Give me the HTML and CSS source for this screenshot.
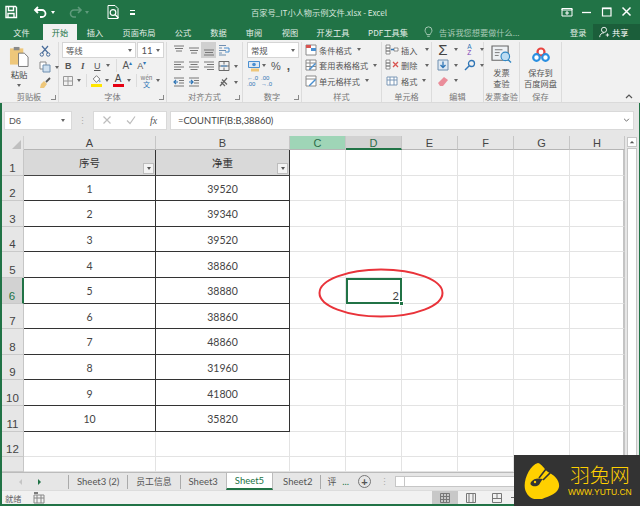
FILE: index.html
```html
<!DOCTYPE html>
<html lang="zh">
<head>
<meta charset="utf-8">
<title>Excel</title>
<link rel="stylesheet" href="styles.css">
</head>
<body>
<div class="window">
  <header class="titlebar">
    <div class="qat">
      <svg class="ic16" viewBox="0 0 16 16"><path d="M3 2.500h9.500l1 1V13.500H3zM5.500 2.500v4h5v-4M5 13.500V9.500h6v4" fill="none" stroke="#fff" stroke-width="1.400"/></svg>
      <svg class="ic16 undo" viewBox="0 0 16 16"><path d="M5 3L2 6l3 3M2.500 6H9a3.500 3.500 0 0 1 0 7H7" fill="none" stroke="#fff" stroke-width="1.800"/></svg>
      <span class="caret-w"></span>
      <svg class="ic16 redo" viewBox="0 0 16 16"><path d="M11 3l3 3-3 3M13.500 6H7a3.500 3.500 0 0 0 0 7h2" fill="none" stroke="#5f9b7c" stroke-width="1.600"/></svg>
      <span class="caret-w dim"></span>
      <svg class="ic16 preview" viewBox="0 0 16 16"><path d="M3 1.500h7l3 3V14.500H3z" fill="none" stroke="#fff"/><circle cx="8" cy="8.500" r="2.800" fill="none" stroke="#fff" stroke-width="1.200"/><path d="M10 10.500l3.500 3.500" stroke="#fff" stroke-width="1.400"/></svg>
      <span class="qat-more"></span>
    </div>
    <div class="doc-title">百家号_IT小人物示例文件.xlsx - Excel</div>
    <div class="winbtns">
      <svg class="ic12" viewBox="0 0 12 12"><path d="M1 2.500h10v7.500H1z" fill="none" stroke="#fff"/><path d="M1 2.500h10v1.500H1zM6 5v4M4.200 7H8" stroke="#fff" fill="none"/></svg>
      <svg class="ic12 wmin" viewBox="0 0 12 12"><path d="M1 6.500h9" stroke="#fff" stroke-width="1.300"/></svg>
      <svg class="ic12 wmax" viewBox="0 0 12 12"><path d="M1.500 2h8.500v8H1.500z" fill="none" stroke="#fff" stroke-width="1.200"/><path d="M1.500 2.500h8.500" stroke="#fff" stroke-width="1.400"/></svg>
      <svg class="ic12 wclose" viewBox="0 0 12 12"><path d="M1.500 1.500l8 8M9.500 1.500l-8 8" stroke="#fff" stroke-width="1.500"/></svg>
    </div>
  </header>

  <nav class="tabs">
    <span class="tab w43">文件</span>
    <span class="tab w34 active">开始</span>
    <span class="tab w36">插入</span>
    <span class="tab w52">页面布局</span>
    <span class="tab w36">公式</span>
    <span class="tab w35">数据</span>
    <span class="tab w36">审阅</span>
    <span class="tab w36">视图</span>
    <span class="tab w50">开发工具</span>
    <span class="tab w60">PDF工具集</span>
    <svg class="bulb" viewBox="0 0 10 14"><path d="M3 10C2.500 8 1 7.500 1 5a4 4 0 0 1 8 0c0 2.500-1.500 3-2 5zM3.500 12h3" fill="none" stroke="#b9d6c6" stroke-width="1"/></svg>
    <span class="tell">告诉我您想要做什么...</span>
    <span class="login">登录</span>
    <span class="share"><svg class="ic12" viewBox="0 0 12 14"><circle cx="6" cy="4.500" r="3" fill="none" stroke="#fff"/><path d="M1 13c0-3 2-5 5-5M8 10.500h4M10 8.500v4" fill="none" stroke="#fff"/></svg>共享</span>
  </nav>

  <section class="ribbon">
    <div class="group g-clip">
      <div class="gbody clip">
        <div class="paste">
          <svg class="paste-ic" viewBox="0 0 21 22"><path d="M1 3h14v17H1z" fill="#eec77a"/><path d="M5 1.500h6V5H5z" fill="#8a8a8a"/><path d="M10 8h6l4 4v10H10z" fill="#fff" stroke="#777"/></svg>
          <span>粘贴</span>
          <i class="caret"></i>
        </div>
        <div class="clip-tools">
          <svg class="ic12" viewBox="0 0 12 12"><path d="M3 1l6 7M9 1L3 8" stroke="#4a6d9b" stroke-width="1.200"/><circle cx="2.800" cy="9.500" r="1.700" fill="none" stroke="#4a6d9b"/><circle cx="9.200" cy="9.500" r="1.700" fill="none" stroke="#4a6d9b"/></svg>
          <div class="hrow"><svg class="ic12" viewBox="0 0 12 12"><path d="M1 1h6v7H1z" fill="#fff" stroke="#8a8a8a"/><path d="M4 4h7v7H4z" fill="#cfe0ef" stroke="#6f8fb0"/></svg><i class="caret c-copy"></i></div>
          <svg class="ic12" viewBox="0 0 12 12"><path d="M7 5l4-4" stroke="#555" stroke-width="1.800"/><path d="M2 7l3-3 3 3-3 4H1z" fill="#eec77a"/></svg>
        </div>
      </div>
      <div class="glabel">剪贴板<i class="launch"></i></div>
    </div>

    <div class="group g-font">
      <div class="gbody vstack">
        <div class="hrow selects">
          <div class="select font-sel">等线<i class="caret"></i></div>
          <div class="select size-sel">11<i class="caret"></i></div>
        </div>
        <div class="hrow fmt">
          <b class="fbtn">B</b><em class="fbtn serif">I</em><u class="fbtn">U</u><i class="caret"></i>
          <span class="vsep"></span>
          <span class="fbtn big">A<sup>▴</sup></span><span class="fbtn small">A<sup>▾</sup></span>
        </div>
        <div class="hrow fmt fmt3">
          <svg class="ic12" viewBox="0 0 12 12"><path d="M1.500 1.500h9v9h-9zM6 1.500v9M1.500 6h9" fill="none" stroke="#999"/></svg><i class="caret"></i>
          <span class="vsep"></span>
          <span class="colorbtn"><svg class="ic12" viewBox="0 0 12 12"><path d="M2 6l4-4 4 4-4 4z" fill="#fff" stroke="#666"/><path d="M10 7c1 1.500 1 3 0 3s-1-1.500 0-3" fill="#4a8fd0"/></svg><i class="bar yellow"></i></span><i class="caret"></i>
          <span class="colorbtn ca"><span class="a-letter">A</span><i class="bar red"></i></span><i class="caret"></i>
          <span class="vsep"></span>
          <span class="wen"><small>wén</small>文</span><i class="caret"></i>
        </div>
      </div>
      <div class="glabel">字体<i class="launch"></i></div>
    </div>

    <div class="group g-align">
      <div class="gbody align-grid">
        <svg class="al" viewBox="0 0 12 12"><path d="M1 2h10M2 4.500h8M3 7h6" stroke="#777"/></svg>
        <svg class="al" viewBox="0 0 12 12"><path d="M1 4h10M2 6.500h8M3 9h6" stroke="#777"/></svg>
        <span class="al-on"><svg class="al" viewBox="0 0 12 12"><path d="M1 6h10M2 8.500h8M1 11h10" stroke="#777"/></svg></span>
        <svg class="al" viewBox="0 0 12 12"><path d="M1 1.500h7M1 4h3M1 6.500h7M1 9h3M1 11h7" stroke="#6f8fb0"/><path d="M6 4h5v4H7" fill="none" stroke="#4a8fd0"/></svg>
        <i></i>
        <svg class="al" viewBox="0 0 12 12"><path d="M1 2h10M1 4.500h7M1 7h10M1 9.500h7" stroke="#777"/></svg>
        <svg class="al" viewBox="0 0 12 12"><path d="M1 2h10M2.500 4.500h7M1 7h10M2.500 9.500h7" stroke="#777"/></svg>
        <svg class="al" viewBox="0 0 12 12"><path d="M1 2h10M4 4.500h7M1 7h10M4 9.500h7" stroke="#777"/></svg>
        <svg class="al" viewBox="0 0 12 12"><path d="M1 1.500h10v9H1zM1 6h10M6 1.500v3M6 7.500v3" fill="none" stroke="#6a6a6a"/><path d="M3 6h6" stroke="#4a8fd0"/></svg>
        <i class="caret"></i>
        <svg class="al" viewBox="0 0 12 12"><path d="M1 2h10M6 4.500h5M6 7h5M1 10h10" stroke="#777"/><path d="M5 6H1M3 4L1 6l2 2" fill="none" stroke="#2f75b5" stroke-width="1.200"/></svg>
        <svg class="al" viewBox="0 0 12 12"><path d="M1 2h10M6 4.500h5M6 7h5M1 10h10" stroke="#777"/><path d="M1 6h4M3 4l2 2-2 2" fill="none" stroke="#2f75b5" stroke-width="1.200"/></svg>
        <span></span>
        <svg class="al" viewBox="0 0 12 12"><path d="M2 10L9 2M4 3.500l5 5M3 6l4 4" fill="none" stroke="#666" stroke-width="1.200"/></svg>
        <i class="caret"></i>
      </div>
      <div class="glabel">对齐方式<i class="launch"></i></div>
    </div>

    <div class="group g-num">
      <div class="gbody vstack">
        <div class="select num-sel">常规<i class="caret"></i></div>
        <div class="hrow num2">
          <svg class="ic12" viewBox="0 0 12 12"><path d="M0.500 1.500h11v6H0.500z" fill="#dfe9f3" stroke="#4a8fd0"/><circle cx="6" cy="4.500" r="1.800" fill="#4a8fd0"/><path d="M3 8.500h8v3H3z" fill="#eec77a"/></svg><i class="caret"></i>
          <span class="pct">%</span><span class="comma">,</span>
        </div>
        <div class="hrow num3">
          <span class="dec"><small>←.0</small><small>.00</small></span>
          <span class="dec"><small>.00</small><small>→.0</small></span>
        </div>
      </div>
      <div class="glabel">数字<i class="launch"></i></div>
    </div>

    <div class="group g-style">
      <div class="gbody rows">
        <div class="cmd"><svg class="ic12" viewBox="0 0 12 12"><path d="M1 1h10v10H1z" fill="#fff" stroke="#8a8a8a"/><path d="M1 1h5v3H1z" fill="#d9534f"/><path d="M6 4h5v3H6z" fill="#4a8fd0"/></svg>条件格式<i class="caret"></i></div>
        <div class="cmd"><svg class="ic12" viewBox="0 0 12 12"><path d="M1 1h10v10H1zM1 4h10M1 7.500h10M5 1v10" fill="#fff" stroke="#8a8a8a"/><path d="M4 10l6-6 1 1-6 6H4z" fill="#4a8fd0"/></svg>套用表格格式<i class="caret"></i></div>
        <div class="cmd"><svg class="ic12" viewBox="0 0 12 12"><path d="M1 1h10v10H1zM1 4h10" fill="#fff" stroke="#8a8a8a"/><path d="M4 10l6-6 1 1-6 6H4z" fill="#4a8fd0"/></svg>单元格样式<i class="caret"></i></div>
      </div>
      <div class="glabel">样式</div>
    </div>

    <div class="group g-cells">
      <div class="gbody rows">
        <div class="cmd"><svg class="ic14" viewBox="0 0 14 12"><path d="M1 1h4v3H1zM1 4h4v3H1zM1 7h4v3H1zM9 4h4v3H9z" fill="#fff" stroke="#777" stroke-width=".8"/><path d="M6 5.500h3" stroke="#2f75b5" stroke-width="1.500"/></svg>插入<i class="caret far"></i></div>
        <div class="cmd"><svg class="ic14" viewBox="0 0 14 12"><path d="M1 1h4v3H1zM1 4h4v3H1zM1 7h4v3H1z" fill="#fff" stroke="#777" stroke-width=".8"/><path d="M8 3l5 5M13 3L8 8" stroke="#d9534f" stroke-width="1.300"/></svg>删除<i class="caret far"></i></div>
        <div class="cmd"><svg class="ic14" viewBox="0 0 14 12"><path d="M2 2h10v8H2zM2 5h10M5 2v8M9 2v8" fill="#fff" stroke="#6f8fb0" stroke-width=".9"/></svg>格式<i class="caret"></i></div>
      </div>
      <div class="glabel">单元格</div>
    </div>

    <div class="group g-edit">
      <div class="gbody edit-grid">
        <span class="sigma">Σ</span><i class="caret"></i>
        <span class="az"><small>A</small><small>Z</small></span><i class="caret"></i>
        <svg class="ic12" viewBox="0 0 12 12"><path d="M1 1h10v10H1z" fill="#dfe9f3" stroke="#6f8fb0"/><path d="M6 2.500v6M3.500 6L6 8.500 8.500 6" fill="none" stroke="#2f75b5" stroke-width="1.300"/></svg><i class="caret"></i>
        <svg class="ic12" viewBox="0 0 12 12"><circle cx="7.500" cy="4.500" r="3" fill="none" stroke="#2f75b5" stroke-width="1.300"/><path d="M5 7l-4 4" stroke="#2f75b5" stroke-width="1.500"/></svg><i class="caret"></i>
        <svg class="ic12" viewBox="0 0 12 12"><path d="M1 8l6-6 4 3-5 6H3z" fill="#ea8d9a"/></svg><i class="caret"></i>
      </div>
      <div class="glabel">编辑</div>
    </div>

    <div class="group g-inv">
      <div class="gbody big-btn">
        <svg class="big-ic" viewBox="0 0 22 20"><path d="M1 1h17v15H1z" fill="#eef1f4" stroke="#666" stroke-width="1.200"/><path d="M4 5h8M4 8h5M4 11h4" stroke="#777"/><circle cx="15" cy="12" r="4.500" fill="#bcdcf2" stroke="#2f87c4" stroke-width="1.200"/><path d="M18 15.500l3 3" stroke="#2f87c4" stroke-width="1.500"/></svg>
        <span>发票<br>查验</span>
      </div>
      <div class="glabel">发票查验</div>
    </div>

    <div class="group g-save">
      <div class="gbody big-btn">
        <svg class="big-ic cloud" viewBox="0 0 18 16"><circle cx="9" cy="5" r="3.500" fill="#fff" stroke="#e8433f" stroke-width="2.200"/><circle cx="4.500" cy="10.500" r="3.300" fill="#fff" stroke="#2a8fe0" stroke-width="2.200"/><circle cx="13.500" cy="10.500" r="3.300" fill="#fff" stroke="#2a8fe0" stroke-width="2.200"/></svg>
        <span>保存到<br>百度网盘</span>
      </div>
      <div class="glabel">保存</div>
    </div>
    <svg class="collapse" viewBox="0 0 8 5"><path d="M1 4l3-3 3 3" fill="none" stroke="#555" stroke-width="1.200"/></svg>
  </section>

  <section class="formula">
    <div class="namebox">D6<i class="caret"></i></div>
    <span class="fdots">⋮</span>
    <div class="fbuttons">
      <svg class="ic10" viewBox="0 0 10 10"><path d="M1.500 1.500l7 7M8.500 1.500l-7 7" stroke="#bdbdbd" stroke-width="1.200"/></svg>
      <svg class="ic10" viewBox="0 0 10 10"><path d="M1 5.500l3 3 5-7" fill="none" stroke="#bdbdbd" stroke-width="1.200"/></svg>
      <span class="fx">fx</span>
    </div>
    <div class="finput">=COUNTIF(B:B,38860)<svg class="fchev" viewBox="0 0 8 5"><path d="M1 1l3 3 3-3" fill="none" stroke="#666" stroke-width="1.200"/></svg></div>
  </section>

  <section class="sheet">
    <div class="grid">
      <div class="corner"><i></i></div><div class="ch">A</div><div class="ch">B</div><div class="ch ch-c">C</div><div class="ch ch-d">D</div><div class="ch">E</div><div class="ch">F</div><div class="ch">G</div><div class="ch">H</div>
      <div class="rh">1</div><div class="c th">序号<i class="filter"></i></div><div class="c th thb">净重<i class="filter"></i></div><div class="e"></div><div class="e"></div><div class="e"></div><div class="e"></div><div class="e"></div><div class="e"></div>
      <div class="rh">2</div><div class="c">1</div><div class="c cb">39520</div><div class="e"></div><div class="e"></div><div class="e"></div><div class="e"></div><div class="e"></div><div class="e"></div>
      <div class="rh">3</div><div class="c">2</div><div class="c cb">39340</div><div class="e"></div><div class="e"></div><div class="e"></div><div class="e"></div><div class="e"></div><div class="e"></div>
      <div class="rh">4</div><div class="c">3</div><div class="c cb">39520</div><div class="e"></div><div class="e"></div><div class="e"></div><div class="e"></div><div class="e"></div><div class="e"></div>
      <div class="rh">5</div><div class="c">4</div><div class="c cb">38860</div><div class="e"></div><div class="e"></div><div class="e"></div><div class="e"></div><div class="e"></div><div class="e"></div>
      <div class="rh rh-on">6</div><div class="c">5</div><div class="c cb">38880</div><div class="e"></div><div class="e sel">2<i class="handle"></i></div><div class="e"></div><div class="e"></div><div class="e"></div><div class="e"></div>
      <div class="rh">7</div><div class="c">6</div><div class="c cb">38860</div><div class="e"></div><div class="e"></div><div class="e"></div><div class="e"></div><div class="e"></div><div class="e"></div>
      <div class="rh">8</div><div class="c">7</div><div class="c cb">48860</div><div class="e"></div><div class="e"></div><div class="e"></div><div class="e"></div><div class="e"></div><div class="e"></div>
      <div class="rh">9</div><div class="c">8</div><div class="c cb">31960</div><div class="e"></div><div class="e"></div><div class="e"></div><div class="e"></div><div class="e"></div><div class="e"></div>
      <div class="rh">10</div><div class="c">9</div><div class="c cb">41800</div><div class="e"></div><div class="e"></div><div class="e"></div><div class="e"></div><div class="e"></div><div class="e"></div>
      <div class="rh">11</div><div class="c">10</div><div class="c cb">35820</div><div class="e"></div><div class="e"></div><div class="e"></div><div class="e"></div><div class="e"></div><div class="e"></div>
      <div class="rh">12</div><div class="e"></div><div class="e"></div><div class="e"></div><div class="e"></div><div class="e"></div><div class="e"></div><div class="e"></div><div class="e"></div>
      <div class="rh"></div><div class="e"></div><div class="e"></div><div class="e"></div><div class="e"></div><div class="e"></div><div class="e"></div><div class="e"></div><div class="e"></div>
    </div>
    <div class="vscroll">
      <span class="sb-up"><svg viewBox="0 0 8 5"><path d="M4 1L1 4h6z" fill="#555"/></svg></span>
      <span class="sb-thumb"></span>
    </div>
    <svg class="ring" viewBox="0 0 128 52"><ellipse cx="64" cy="26" rx="61.500" ry="23.500" fill="none" stroke="#e9333a" stroke-width="2"/></svg>
  </section>

  <section class="sheettabs">
    <span class="nav-l"></span><span class="nav-r"></span>
    <span class="stab">Sheet3 (2)</span>
    <span class="stab cjk">员工信息</span>
    <span class="stab">Sheet3</span>
    <span class="stab on">Sheet5</span>
    <span class="stab nob">Sheet2</span>
    <span class="stab last cjk">评</span>
    <span class="more">...</span>
    <span class="plus">+</span>
    <span class="tdots">⋮</span>
    <span class="hscroll"><i></i></span>
  </section>

  <footer class="status">
    <span>就绪</span>
    <svg class="ic12 macro" viewBox="0 0 12 12"><path d="M1 3h10v8H1zM1 6h10M4 3v8M8 3v8" fill="none" stroke="#888"/><path d="M1 1h4" stroke="#555" stroke-width="1.500"/></svg>
    <span class="view on"><svg class="ic12" viewBox="0 0 12 12"><path d="M1.500 1.500h9v9h-9zM1.500 4.500h9M1.500 7.500h9M4.500 1.500v9M7.500 1.500v9" fill="none" stroke="#777"/></svg></span>
    <span class="view"><svg class="ic12" viewBox="0 0 12 12"><path d="M1.500 1.500h9v9h-9zM4 1.500v9M8 1.500v9" fill="none" stroke="#777"/></svg></span>
    <span class="view"><svg class="ic12" viewBox="0 0 12 12"><path d="M1.500 1.500h9v9h-9zM6 1.500v5H1.500M6 6.500h4.500" fill="none" stroke="#777"/></svg></span>
    <span class="zoom-minus"></span>
  </footer>

  <aside class="mark">
    <svg class="mark-logo" viewBox="0 0 36 36"><path d="M14 0c4 1 6 6 10 9 6 3 12 8 11 15-1 6-9 9-17 12C10 38 3 34 1 26-1 17 6 2 14 0z" fill="#ffd000"/><path d="M7 19c3-4 7-4 12-3-3 3-3 6-6 7-4 1-8-1-6-4z" fill="#333"/><path d="M15 15l7-9M19 17l9-9" stroke="#333" stroke-width="1.600"/><circle cx="11" cy="19" r="1.200" fill="#ffd000"/></svg>
    <div class="mark-text"><strong>羽兔网</strong><span>WWW.YUTU.CN</span></div>
  </aside>
</div>
</body>
</html>
```

FILE: styles.css
```css
* { box-sizing: border-box; }
html, body { margin: 0; padding: 0; }
body { width: 640px; height: 506px; overflow: hidden; font-family: "Noto Sans CJK SC", "Liberation Sans", sans-serif; font-size: 8px; color: #555; }
svg { display: block; flex: none; }
i { display: block; flex: none; }
.window { position: relative; width: 640px; height: 506px; background: #e6e6e6; border-left: 2px solid #217346; border-right: 1px solid #217346; border-bottom: 2px solid #217346; display: flex; flex-direction: column; }
.ic16 { width: 16px; height: 16px; }
.ic14 { width: 14px; height: 12px; }
.ic12 { width: 12px; height: 12px; }
.ic10 { width: 10px; height: 10px; }
.caret { width: 0; height: 0; border-left: 2.5px solid transparent; border-right: 2.5px solid transparent; border-top: 3px solid #666; }

/* title bar */
.titlebar { height: 24px; margin: 0 -1px 0 -2px; background: #217346; display: flex; align-items: center; color: #dbe9e1; position: relative; flex: none; }
.qat { display: flex; align-items: center; padding-left: 3px; }
.caret-w { width: 0; height: 0; border-left: 2.500px solid transparent; border-right: 2.500px solid transparent; border-top: 3px solid #fff; margin: 0 0 0 2px; }
.caret-w.dim { border-top-color: #5f9b7c; }
.undo { margin-left: 14px; }
.redo { margin-left: 12px; }
.preview { margin-left: 16px; }
.qat-more { width: 5px; height: 5px; margin-left: 9px; border-top: 1px solid #fff; border-bottom: 2px solid #fff; }
.doc-title { position: absolute; left: 251px; top: 5px; font-size: 8.200px; line-height: 15px; white-space: nowrap; color: #d6e6dd; }
.winbtns { margin-left: auto; display: flex; align-items: center; padding-right: 7px; gap: 8px; }

/* tabs */
.tabs { height: 16px; margin: 0 -1px 0 -2px; background: #217346; display: flex; align-items: center; color: #e2eee7; font-size: 8.200px; line-height: 16px; flex: none; position: relative; }
.tab { text-align: center; flex: none; white-space: nowrap; }
.w43 { width: 43px; }
.w34 { width: 34px; height: 16px; }
.w36 { width: 36px; }
.w52 { width: 52px; }
.w35 { width: 35px; }
.w50 { width: 50px; }
.w60 { width: 60px; }
.active { background: #f1f1f1; color: #217346; }
.bulb { width: 9px; height: 12px; margin-left: 6px; }
.tell { margin-left: 6px; color: #a9cbb8; white-space: nowrap; font-size: 8.200px; }
.login { position: absolute; left: 570px; top: 0; }
.share { position: absolute; right: 0; top: 0; width: 47px; height: 16px; background: #1b5e3a; display: flex; align-items: center; gap: 2px; padding-left: 5px; color: #fff; }

/* ribbon */
.ribbon { height: 63px; margin: 0 -1px 0 -2px; background: #f1f1f1; display: flex; position: relative; border-bottom: 1px solid #dadada; flex: none; }
.group { display: flex; flex-direction: column; border-right: 1px solid #dcdcdc; flex: none; margin-top: 2px; height: 60px; }
.gbody { height: 48px; flex: none; }
.glabel { height: 12px; line-height: 12px; font-size: 8.200px; text-align: center; position: relative; color: #777; white-space: nowrap; }
.launch { position: absolute; right: 2px; bottom: 2px; width: 5px; height: 5px; border-right: 1px solid #888; border-bottom: 1px solid #888; }
.g-clip { width: 59px; }
.g-font { width: 108px; }
.g-align { width: 76px; }
.g-num { width: 59px; }
.g-style { width: 80px; }
.g-cells { width: 50px; }
.g-edit { width: 52px; }
.g-inv { width: 36px; }
.g-save { width: 42px; }
.hrow { display: flex; align-items: center; }
.vstack { display: flex; flex-direction: column; padding: 0 2px; }
.clip { display: flex; padding-left: 9px; gap: 11px; }
.paste { display: flex; flex-direction: column; align-items: center; width: 20px; font-size: 8.400px; line-height: 12px; color: #444; }
.paste-ic { width: 20px; height: 22px; margin: 3px 0 1px; }
.paste .caret { margin-top: 4px; }
.clip-tools { display: flex; flex-direction: column; gap: 4px; padding-top: 3px; margin-left: -1px; }
.c-copy { margin-left: 4px; }

.selects { gap: 1px; }
.select { background: #fff; border: 1px solid #d5d5d5; height: 16px; display: flex; align-items: center; justify-content: space-between; padding: 0 3px; font-size: 8.400px; color: #555; }
.font-sel { width: 76px; margin-left: 1px; }
.size-sel { width: 27px; font-family: "Lato", sans-serif; font-size: 9.500px; }
.fmt { height: 15px; }
.fbtn { width: 14.500px; text-align: center; font-family: "Liberation Sans", sans-serif; font-size: 9px; color: #555; font-style: normal; }
.serif { font-family: "Liberation Serif", serif; font-style: italic; font-weight: bold; }
.fmt .caret { margin: 0 3px 0 1.500px; }
.fmt > .fbtn.big { font-size: 10px; }
.fbtn sup { font-size: 6px; color: #2f75b5; line-height: 0; }
.vsep { width: 1px; height: 13px; background: #dcdcdc; margin: 0 3px; }
.fmt3 .ic12:first-child { margin-left: 1px; }
.fmt3 .caret { margin: 0 2px 0 3px; }
.colorbtn { width: 12px; height: 13px; display: flex; flex-direction: column; align-items: center; position: relative; }
.ca { margin-left: 1px; }
.colorbtn .ic12 { height: 10px; width: 11px; }
.bar { width: 11px; height: 3px; }
.yellow { background: #ffe600; }
.red { background: #e60012; }
.a-letter { font-family: "Liberation Sans", sans-serif; font-size: 10px; height: 10px; line-height: 10px; color: #444; }
.wen { display: flex; flex-direction: column; align-items: center; font-size: 7px; line-height: 7px; color: #2f75b5; width: 13px; }
.wen small { font-size: 6px; color: #777; }

.align-grid { display: grid; grid-template-columns: 15px 15px 15px 15px 10px; grid-auto-rows: 16px; justify-items: center; align-items: center; padding-left: 4px; }
.al { width: 12px; height: 12px; }
.al-on { width: 15px; height: 16px; background: #d0d0d0; display: flex; align-items: center; justify-content: center; }

.num-sel { width: 52px; margin-left: 2px; }
.num2 { height: 15px; padding-left: 3px; }
.num2 .caret { margin-left: 2px; }
.pct { font-family: "Liberation Sans", sans-serif; font-size: 11px; margin-left: 5px; color: #555; }
.comma { font-family: "Liberation Sans", sans-serif; font-size: 12px; font-weight: bold; margin-left: 6px; line-height: 10px; }
.num3 { height: 15px; padding-left: 2px; gap: 2px; }
.dec { display: flex; flex-direction: column; width: 12px; font-family: "Liberation Sans", sans-serif; line-height: 6px; color: #2f75b5; }
.dec small { font-size: 6px; white-space: nowrap; }

.rows { display: flex; flex-direction: column; padding-left: 3px; }
.cmd { display: flex; align-items: center; height: 15.500px; white-space: nowrap; font-size: 8.200px; color: #555; gap: 2px; }
.cmd .caret { margin-left: 3px; }
.cmd .far { margin-left: 6px; }

.edit-grid { display: grid; grid-template-columns: 12px 10px 13px 8px; grid-auto-rows: 15.500px; align-items: center; justify-items: center; padding-left: 5px; column-gap: 2px; }
.sigma { font-family: "Liberation Sans", sans-serif; font-size: 15px; line-height: 14px; color: #444; }
.az { display: flex; flex-direction: column; font-family: "Liberation Sans", sans-serif; line-height: 6px; }
.az small { font-size: 6.500px; color: #2f75b5; }
.az small + small { color: #7a3fb5; }

.big-btn { display: flex; flex-direction: column; align-items: center; color: #555; font-size: 8.200px; line-height: 11px; text-align: center; white-space: nowrap; }
.big-ic { width: 21px; height: 19px; margin: 3px 0 3px; }
.cloud { width: 18px; height: 16px; margin: 5px 0 4px; }
.collapse { position: absolute; right: 7px; bottom: 3px; width: 8px; height: 5px; }

/* formula bar */
.formula { height: 33px; display: flex; align-items: center; padding-right: 5px; padding-top: 1px; flex: none; }
.namebox { width: 68px; height: 19px; margin-left: 2px; background: #fff; border: 1px solid #d9d9d9; display: flex; align-items: center; justify-content: space-between; padding: 0 6px 0 4px; font-family: "Liberation Sans", sans-serif; font-size: 9.500px; color: #555; }
.fdots { width: 21px; text-align: center; color: #aaa; font-size: 9px; }
.fbuttons { width: 74px; height: 19px; background: #fff; border: 1px solid #d9d9d9; display: flex; align-items: center; padding-left: 8px; gap: 14px; }
.fx { font-family: "Liberation Serif", serif; font-style: italic; font-size: 10px; color: #555; }
.finput { flex: 1; height: 19px; margin-left: 3px; background: #fff; border: 1px solid #d9d9d9; display: flex; align-items: center; justify-content: space-between; padding: 0 3px 0 7px; font-family: "Lato", sans-serif; font-size: 9.400px; color: #444; }
.fchev { width: 7px; height: 4px; }

/* sheet */
.sheet { position: relative; height: 336px; flex: none; display: flex; }
.grid { width: 623px; flex: none; display: grid; grid-template-columns: 22px 132px 134px 56px 56px 56px 56px 56px 55px; grid-template-rows: 14px repeat(11, 25.6px) 25.500px 15px; background: #fff; overflow: hidden; font-family: "Lato", "Liberation Sans", sans-serif; }
.corner { background: #e6e6e6; border-right: 1px solid #d0d0d0; display: flex; align-items: flex-end; justify-content: flex-end; padding: 0 2px 1px 0; }
.corner i { width: 0; height: 0; border-left: 9px solid transparent; border-bottom: 9px solid #bfbfbf; }
.ch { background: #e6e6e6; border-right: 1px solid #c6c6c6; border-bottom: 1px solid #b5b5b5; font-size: 11px; line-height: 15px; text-align: center; color: #444; font-family: "Liberation Sans", sans-serif; }
.ch-c { background: #9fd5b7; color: #2b6b49; }
.ch-d { background: #d2d2d2; border-bottom: 2px solid #217346; color: #2b6b49; }
.rh { background: #e6e6e6; border-right: 1px solid #c6c6c6; border-bottom: 1px solid #c9c9c9; font-size: 11.500px; color: #444; display: flex; align-items: flex-end; justify-content: center; line-height: 13px; font-family: "Liberation Sans", sans-serif; }
.rh-on { background: #d2d2d2; border-right: 2px solid #217346; color: #217346; }
.c { border-bottom: 1px solid #333; display: flex; align-items: center; justify-content: center; font-size: 10.500px; color: #444; border-right: 1px solid #333; padding-top: 2px; }
.th { background: #d9d9d9; position: relative; font-family: "Noto Sans CJK SC", sans-serif; font-size: 10.500px; padding: 0; border-bottom: 1px solid #444; color: #333; }
.filter { position: absolute; right: 1px; bottom: 1px; width: 11px; height: 11px; background: #f3f3f3; border: 1px solid #bdbdbd; }
.filter::after { content: ""; display: block; margin: 3px auto 0; width: 0; height: 0; border-left: 2.500px solid transparent; border-right: 2.500px solid transparent; border-top: 3px solid #555; }
.e { border-right: 1px solid #e3e3e3; border-bottom: 1px solid #e3e3e3; }
.e:nth-child(9n) { border-right: 2px solid #c4c4c4; }
.sel { position: relative; border: 1px solid #217346; outline: 1px solid #217346; outline-offset: -2px; font-size: 11px; color: #444; display: flex; align-items: flex-end; justify-content: flex-end; padding: 0 2px 0 0; line-height: 15px; font-family: "Lato", sans-serif; }
.handle { position: absolute; right: -3px; bottom: -3px; box-sizing: content-box; width: 3px; height: 3px; background: #217346; border: 1px solid #fff; }
.vscroll { flex: 1; background: #e6e6e6; padding: 1px 2px 0 2px; display: flex; flex-direction: column; gap: 1px; }
.sb-up { height: 10px; background: #fff; border: 1px solid #c6c6c6; display: flex; align-items: center; justify-content: center; }
.sb-up svg { width: 6px; height: 4px; }
.sb-thumb { flex: 1; background: #fff; border: 1px solid #c6c6c6; }
.ring { position: absolute; left: 314.500px; top: 131px; width: 128px; height: 52px; pointer-events: none; }

/* sheet tabs */
.sheettabs { height: 18px; display: flex; align-items: center; position: relative; background: #e6e6e6; border-top: 1px solid #bbb; font-family: "Lato", "Noto Sans CJK SC", sans-serif; font-size: 9.500px; color: #555; flex: none; }
.nav-l { width: 0; height: 0; margin-left: 17px; border-right: 3px solid #c5c5c5; border-top: 3px solid transparent; border-bottom: 3px solid transparent; }
.nav-r { width: 0; height: 0; margin-left: 16px; margin-right: 27px; border-left: 3px solid #217346; border-top: 3px solid transparent; border-bottom: 3px solid transparent; }
.stab { height: 14px; line-height: 14px; padding: 0 8px; border-left: 1px solid #aaa; white-space: nowrap; }
.stab.cjk { font-family: "Noto Sans CJK SC", sans-serif; font-size: 8.800px; }
.stab.on { height: 17px; line-height: 16px; background: #fff; color: #217346; border-left: 1px solid #bbb; border-right: 1px solid #bbb; border-bottom: 2px solid #217346; margin-top: -1px; }
.stab.nob { border-left: none; padding-left: 10px; }
.stab.last { padding: 0 6px; }
.more { color: #217346; line-height: 10px; }
.plus { width: 13px; height: 13px; margin-left: 9px; border: 1.500px solid #777; border-radius: 50%; display: flex; align-items: center; justify-content: center; font-family: "Liberation Sans", sans-serif; font-weight: bold; font-size: 11px; line-height: 10px; color: #555; }
.tdots { margin-left: 9px; color: #aaa; font-size: 9px; }
.hscroll { margin-left: 6px; width: 140px; height: 11px; background: #fff; border: 1px solid #c6c6c6; }
.hscroll i { width: 9px; height: 9px; border-right: 1px solid #c6c6c6; }

/* status */
.status { height: 14px; flex: none; margin-right: -1px; display: flex; align-items: center; background: #f1f1f1; padding-left: 3px; font-size: 8.200px; color: #666; border-top: 1px solid #dcdcdc; }
.macro { margin-left: 12px; }
.view { width: 26px; height: 100%; display: flex; align-items: center; justify-content: center; }
.view.on { background: #c8c8c8; margin-left: 387px; }
.zoom-minus { width: 4px; height: 1px; margin-left: 1px; background: #666; }

/* watermark */
.mark { position: absolute; right: -1px; bottom: -2px; width: 126px; height: 51px; background: #333; display: flex; align-items: center; padding-left: 10px; gap: 8px; }
.mark-logo { width: 36px; height: 36px; }
.mark-text { display: flex; flex-direction: column; align-items: center; color: #ffd000; }
.mark-text strong { font-weight: 300; font-size: 20px; line-height: 24px; }
.mark-text span { font-family: "Liberation Sans", sans-serif; font-size: 8.500px; line-height: 11px; white-space: nowrap; }
```
